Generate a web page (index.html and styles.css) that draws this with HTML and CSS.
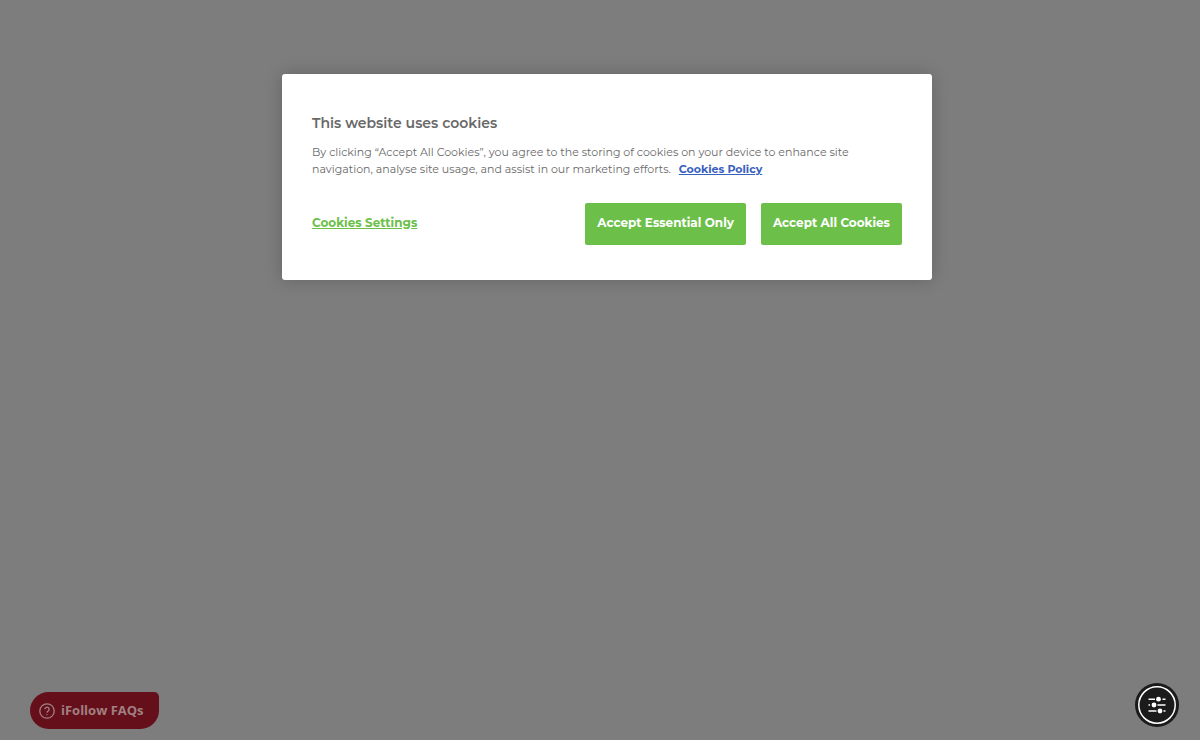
FILE: index.html
```
<!DOCTYPE html>
<html lang="en">
<head>
    <meta charset="UTF-8">
    <meta name="viewport" content="width=device-width, initial-scale=1.0">
    <title>iFollow</title>
    <link rel="stylesheet" href="styles.css">
</head>
<body>
    <main class="page">
        <section class="cookie-banner" role="dialog" aria-labelledby="cookie-title">
            <h2 class="cookie-title" id="cookie-title">This website uses cookies</h2>
            <p class="cookie-text">By clicking “Accept All Cookies”, you agree to the storing of cookies on your device to enhance site navigation, analyse site usage, and assist in our marketing efforts. <a class="policy-link" href="#">Cookies Policy</a></p>
            <div class="cookie-actions">
                <button class="settings-button" type="button">Cookies Settings</button>
                <button class="accept-button" type="button">Accept Essential Only</button>
                <button class="accept-button" type="button">Accept All Cookies</button>
            </div>
        </section>
        <footer class="widgets">
            <button class="faq-button" type="button">
                <svg class="faq-icon" viewBox="0 0 16 16" aria-hidden="true">
                    <circle cx="8" cy="8" r="7.2" />
                    <path d="M5.9 6.3a2.1 2.1 0 1 1 3.4 1.6C8.5 8.5 8 8.8 8 9.7" />
                    <path d="M8 11.3v1" />
                </svg>
                iFollow FAQs
            </button>
            <button class="access-button" type="button" aria-label="Accessibility options">
                <svg class="access-icon" viewBox="0 0 44 44" aria-hidden="true">
                    <circle class="disc" cx="22" cy="22" r="22" />
                    <circle class="ring" cx="22" cy="22" r="18.2" />
                    <path class="lines" d="M13.5 16.2h6.5M27.5 16.2h3M13.5 22h1.5M22.5 22h8M13.5 28h8M28.5 28h2" />
                    <circle class="knob" cx="23.5" cy="16.2" r="2.4" />
                    <circle class="knob" cx="19" cy="22" r="2.4" />
                    <circle class="knob" cx="25" cy="28" r="2.4" />
                </svg>
            </button>
        </footer>
    </main>
</body>
</html>
```
FILE: styles.css
```
* {
    box-sizing: border-box;
}

body {
    margin: 0;
    background-color: #7d7d7d;
    font-family: Montserrat, Inter, sans-serif;
}

button {
    border: none;
    font-family: inherit;
    cursor: pointer;
}

.page {
    display: flex;
    flex-direction: column;
    align-items: center;
    justify-content: space-between;
    min-height: 100vh;
    padding-top: 74px;
}

.cookie-banner {
    width: 100%;
    max-width: 650px;
    margin-left: 14px;
    padding: 37px 30px 35px;
    background: white;
    border-radius: 3px;
    box-shadow: 0 0 18px rgba(0, 0, 0, 0.2);
    color: #696969;
}

.cookie-title {
    margin: 0 0 9px;
    font-size: 14px;
    font-weight: 600;
    line-height: 24px;
}

.cookie-text {
    margin: 0 0 25px;
    font-size: 11px;
    font-weight: 400;
    line-height: 17px;
}

.policy-link {
    margin-left: 5px;
    color: #3860be;
    font-weight: 700;
}

.cookie-actions {
    display: flex;
    flex-wrap: wrap;
    align-items: center;
    gap: 15px;
}

.settings-button {
    margin-right: auto;
    padding: 0 0 4px;
    background: none;
    color: #6cc04a;
    font-size: 12px;
    font-weight: 700;
    text-decoration: underline;
}

.accept-button {
    padding: 11px 12px 13px;
    background-color: #6cc04a;
    border-radius: 2px;
    color: white;
    font-size: 12px;
    font-weight: 700;
    line-height: 18px;
}

.widgets {
    display: flex;
    align-items: flex-end;
    justify-content: space-between;
    width: 100%;
    padding: 0 21px 11px 30px;
}

.faq-button {
    display: flex;
    align-items: center;
    gap: 6px;
    padding: 9px 15px 9px 9px;
    background-color: #650f1a;
    border-radius: 19px 5px 19px 19px;
    color: #a08083;
    font-family: "Segoe UI", "Open Sans", sans-serif;
    font-size: 13px;
    font-weight: 700;
    line-height: 19px;
}

.faq-icon {
    width: 16px;
    height: 16px;
    fill: none;
    stroke: currentColor;
    stroke-width: 1.3;
}

.access-button {
    padding: 0;
    margin-bottom: 2px;
    background: none;
    border-radius: 50%;
}

.access-icon {
    display: block;
    width: 44px;
    height: 44px;
}

.disc {
    fill: #1b1b1b;
}

.ring {
    fill: none;
    stroke: white;
    stroke-width: 1.5;
}

.lines {
    stroke: white;
    stroke-width: 1.5;
}

.knob {
    fill: white;
}
```
